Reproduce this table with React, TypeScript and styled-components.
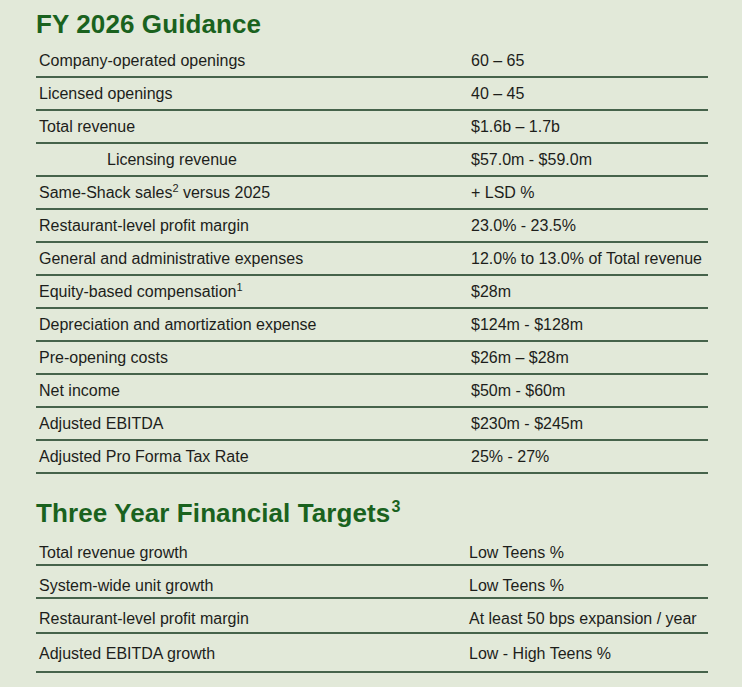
import React, { FC } from 'react';
import styled, { createGlobalStyle } from 'styled-components';

interface Row {
	label: React.ReactNode
	value: string
	indent?: boolean
	bottom?: number
}

const GlobalStyle = createGlobalStyle`
	html, body {
		margin: 0;
		padding: 0;
		background: #e2e9d9;
	}
	body {
		font-family: "Liberation Sans", Arial, sans-serif;
		color: #1d1e1b;
	}
`

const Page = styled.div`
	width: 742px;
	height: 687px;
	box-sizing: border-box;
	padding: 9px 0 0 36px;
	background: #e2e9d9;
	overflow: hidden;
`

const Title = styled.h1<{ $gap?: number }>`
	margin: ${p => p.$gap ?? 0}px 0 0 0;
	font-size: 26px;
	line-height: 30px;
	font-weight: 700;
	color: #1a621e;
	letter-spacing: 0.1px;
`

const TitleSup = styled.sup`
	font-size: 16px;
	line-height: 0;
	vertical-align: 10px;
	margin-left: 1px;
`

const Table = styled.div<{ $first?: number }>`
	display: flex;
	flex-direction: column;
	width: 672px;
	margin-top: ${p => p.$first ?? 5}px;
`

const TableRow = styled.div<{ $split: number, $top: number, $bottom: number }>`
	display: grid;
	grid-template-columns: ${p => p.$split}px 1fr;
	padding: ${p => p.$top}px 0 ${p => p.$bottom}px;
	border-bottom: 2px solid #46634b;
	font-size: 16px;
	line-height: 20px;
`

const Label = styled.div<{ $indent?: boolean }>`
	padding-left: ${p => p.$indent ? 71 : 3}px;
	white-space: nowrap;
`

const Value = styled.div`
	padding-left: 3px;
	white-space: nowrap;
`

const Sup = styled.sup`
	font-size: 11px;
	line-height: 0;
	vertical-align: 6px;
`

const guidance: Row[] = [
	{ label: 'Company-operated openings', value: '60 – 65' },
	{ label: 'Licensed openings', value: '40 – 45' },
	{ label: 'Total revenue', value: '$1.6b – 1.7b' },
	{ label: 'Licensing revenue', value: '$57.0m - $59.0m', indent: true },
	{ label: <>Same-Shack sales<Sup>2</Sup> versus 2025</>, value: '+ LSD %' },
	{ label: 'Restaurant-level profit margin', value: '23.0% - 23.5%' },
	{ label: 'General and administrative expenses', value: '12.0% to 13.0% of Total revenue' },
	{ label: <>Equity-based compensation<Sup>1</Sup></>, value: '$28m' },
	{ label: 'Depreciation and amortization expense', value: '$124m - $128m' },
	{ label: 'Pre-opening costs', value: '$26m – $28m' },
	{ label: 'Net income', value: '$50m - $60m' },
	{ label: 'Adjusted EBITDA', value: '$230m - $245m' },
	{ label: 'Adjusted Pro Forma Tax Rate', value: '25% - 27%' },
];

const targets: Row[] = [
	{ label: 'Total revenue growth', value: 'Low Teens %', bottom: 1 },
	{ label: 'System-wide unit growth', value: 'Low Teens %', bottom: 1 },
	{ label: 'Restaurant-level profit margin', value: 'At least 50 bps expansion / year', bottom: 3 },
	{ label: 'Adjusted EBITDA growth', value: 'Low - High Teens %', bottom: 7 },
];

const App: FC = () => {
	return (
		<>
			<GlobalStyle />
			<Page>
				<Title>FY 2026 Guidance</Title>
				<Table $first={6}>
					{guidance.map((row, i) => (
						<TableRow key={i} $split={432} $top={6} $bottom={5}>
							<Label $indent={row.indent}>{row.label}</Label>
							<Value>{row.value}</Value>
						</TableRow>
					))}
				</Table>

				<Title $gap={24}>Three Year Financial Targets<TitleSup>3</TitleSup></Title>
				<Table $first={5}>
					{targets.map((row, i) => (
						<TableRow key={i} $split={430} $top={10} $bottom={row.bottom ?? 1}>
							<Label>{row.label}</Label>
							<Value>{row.value}</Value>
						</TableRow>
					))}
				</Table>
			</Page>
		</>
	)
}

export default App;
